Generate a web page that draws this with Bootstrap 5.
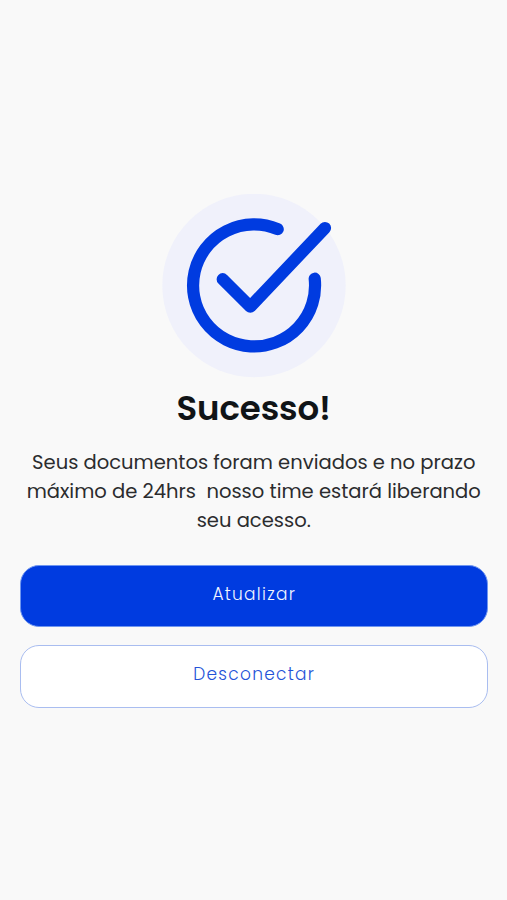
<!DOCTYPE html>
<html lang="pt-BR">
<head>
<meta charset="utf-8">
<meta name="viewport" content="width=device-width, initial-scale=1">
<title>Sucesso!</title>
<link href="https://cdn.jsdelivr.net/npm/bootstrap@5.3.0/dist/css/bootstrap.min.css" rel="stylesheet">
<style>
body{background:#f9f9f9;color:#2b2c2e;font-family:Poppins,Inter,sans-serif;overflow:hidden}
.screen{padding:194px 19.5px 0 20px}
.emblem{width:184px;height:184px;margin-right:-.5px}
.headline{font-size:34px;font-weight:600;line-height:50px;color:#101417;margin:5px 0 15px;letter-spacing:-.1px}
.message{font-size:19.55px;line-height:29.2px;margin-bottom:29.4px}
.message span{display:block;white-space:nowrap}
.actions{gap:18px}
.action{height:62px;border-radius:19px;font-family:Poppins,Inter,sans-serif;font-size:17px;font-weight:300;line-height:24px;letter-spacing:1.27px;padding:0 0 5px 1px}
.action-main{background:#003be0;border:1px solid #6f96f0;color:#f2f5ff}
.action-exit{height:63px;background:#fff;border:1px solid #a9bdf0;color:#2453d8}
</style>
</head>
<body>
<main class="screen d-flex flex-column align-items-center text-center">
<svg class="emblem" viewBox="0 0 184 184" aria-hidden="true">
<circle cx="92" cy="91.5" r="91.7" fill="#f0f1fb"/>
<g fill="none" stroke="#003be0" stroke-width="12.2" stroke-linecap="round" stroke-linejoin="round">
<path d="M115.7 35.2A61 61 0 1 0 152.7 84.7"/>
<path d="M60.7 85.2L88.3 112.7L163 34"/>
</g>
</svg>
<h1 class="headline">Sucesso!</h1>
<p class="message"><span>Seus documentos foram enviados e no prazo</span><span>máximo de 24hrs&nbsp; nosso time estará liberando</span><span>seu acesso.</span></p>
<div class="actions d-grid w-100">
<button type="button" class="btn action action-main">Atualizar</button>
<button type="button" class="btn action action-exit">Desconectar</button>
</div>
</main>
<script src="https://cdn.jsdelivr.net/npm/bootstrap@5.3.0/dist/js/bootstrap.bundle.min.js"></script>
</body>
</html>
